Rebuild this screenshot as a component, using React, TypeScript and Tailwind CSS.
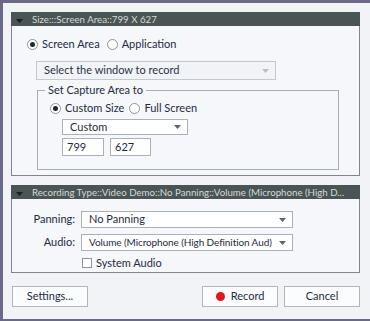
import React from 'react';

const font = { fontFamily: 'Lato, "Noto Sans", sans-serif' };

const Radio: React.FC<{ checked?: boolean; label: string }> = ({ checked, label }) => (
  <label className="flex items-center gap-[4px] text-[11px] text-[#1f2a44]">
    <span className="w-[11px] h-[11px] rounded-full border border-[#8d949c] bg-white flex items-center justify-center">
      {checked && <span className="w-[5px] h-[5px] rounded-full bg-[#1e2430]" />}
    </span>
    {label}
  </label>
);

const Arrow: React.FC<{ light?: boolean }> = ({ light }) => (
  <svg width="7" height="4" viewBox="0 0 7 4" className="shrink-0">
    <path d="M0 0 L7 0 L3.5 4 Z" fill={light ? '#b8bec6' : '#5c6470'} />
  </svg>
);

const Select: React.FC<{ value: string; className: string; disabled?: boolean; text?: string }> = ({
  value,
  className,
  disabled,
  text = 'text-[11px]',
}) => (
  <div
    className={`flex items-center justify-between gap-[3px] pl-[7px] pr-[6px] border ${text} ${
      disabled ? 'border-[#c3c9d0] bg-[#f1f3f6] text-[#2a3248]' : 'border-[#a9b1ba] bg-white text-[#1f2a44]'
    } ${className}`}
  >
    <span className="whitespace-nowrap overflow-hidden">{value}</span>
    <Arrow light={disabled} />
  </div>
);

const Header: React.FC<{ title: string }> = ({ title }) => (
  <div className="h-[14px] bg-[#4a5452] flex items-center pl-[5px] gap-[9px] text-[9.7px] text-[#d4dad9] leading-[14px]">
    <svg width="7" height="4" viewBox="0 0 7 4" className="mt-[4px] shrink-0">
      <path d="M0 0 L7 0 L3.5 4 Z" fill="#1a1f1e" />
    </svg>
    <span className="whitespace-nowrap overflow-hidden">{title}</span>
  </div>
);

const Button: React.FC<{ children: React.ReactNode; className?: string }> = ({ children, className }) => (
  <button className={`h-[21px] w-[76px] border border-[#b0b6bd] bg-[#fbfcfd] text-[11px] text-[#1f2a44] flex items-center justify-center gap-[6px] ${className ?? ''}`}>
    {children}
  </button>
);

export default function App() {
  return (
    <div style={font} className="w-[370px] h-[321px] bg-[#6a6a86] pl-[3px] pt-[3px] pb-[2px] overflow-hidden">
      <div className="h-full bg-[#f1f3f7] pl-[8px] pr-[10px] pt-[9px] flex flex-col">
        {/* panel 1 */}
        <div className="w-[349px]">
          <Header title="Size:::Screen Area::799 X 627" />
          <div className="h-[150px] border-x border-b border-[#7f868c] bg-[#f5f7fa] pl-[15px] pt-[12px]">
            <div className="flex items-center gap-[7px] h-[13px]">
              <Radio checked label="Screen Area" />
              <Radio label="Application" />
            </div>
            <Select disabled value="Select the window to record" className="ml-[9px] mt-[10px] w-[240px] h-[19px]" />
            <fieldset className="ml-[10px] mt-[4px] w-[302px] h-[86px] border border-[#a6adb5] pl-[12px]">
              <legend className="ml-[-5px] px-[3px] text-[11px] text-[#1f2a44] leading-[12px]">Set Capture Area to</legend>
              <div className="flex items-center gap-[5px] h-[13px] mt-[6px]">
                <Radio checked label="Custom Size" />
                <Radio label="Full Screen" />
              </div>
              <Select value="Custom" className="ml-[12px] mt-[4px] w-[126px] h-[16px]" />
              <div className="flex gap-[6px] ml-[12px] mt-[3px]">
                <div className="w-[42px] h-[18px] border border-[#a9b1ba] bg-white text-[11px] text-[#1f2a44] pl-[4px] leading-[16px]">799</div>
                <div className="w-[41px] h-[18px] border border-[#a9b1ba] bg-white text-[11px] text-[#1f2a44] pl-[4px] leading-[16px]">627</div>
              </div>
            </fieldset>
          </div>
        </div>

        {/* panel 2 */}
        <div className="w-[349px] mt-[9px]">
          <Header title="Recording Type::Video Demo::No Panning::Volume (Microphone (High D..." />
          <div className="h-[74px] border-x border-b border-[#7f868c] bg-[#f5f7fa] pt-[12px]">
            <div className="flex items-center h-[17px]">
              <span className="w-[63px] text-right text-[11px] text-[#1f2a44]">Panning:</span>
              <Select value="No Panning" className="ml-[6px] w-[212px] h-[17px]" />
            </div>
            <div className="flex items-center h-[17px] mt-[6px]">
              <span className="w-[63px] text-right text-[11px] text-[#1f2a44]">Audio:</span>
              <Select
                value="Volume (Microphone (High Definition Aud)"
                text="text-[10px] tracking-[-0.1px]"
                className="ml-[6px] w-[212px] h-[17px]"
              />
            </div>
            <label className="flex items-center gap-[4px] ml-[70px] mt-[4px] text-[11px] text-[#1f2a44]">
              <span className="w-[10px] h-[10px] border border-[#8d949c] bg-white" />
              System Audio
            </label>
          </div>
        </div>

        {/* buttons */}
        <div className="flex mt-[13px] w-[349px]">
          <Button className="ml-[1px]">Settings...</Button>
          <Button className="ml-auto">
            <span className="w-[9px] h-[9px] rounded-full bg-[#e3161b]" />
            Record
          </Button>
          <Button className="ml-[6px]">Cancel</Button>
        </div>
      </div>
    </div>
  );
}
